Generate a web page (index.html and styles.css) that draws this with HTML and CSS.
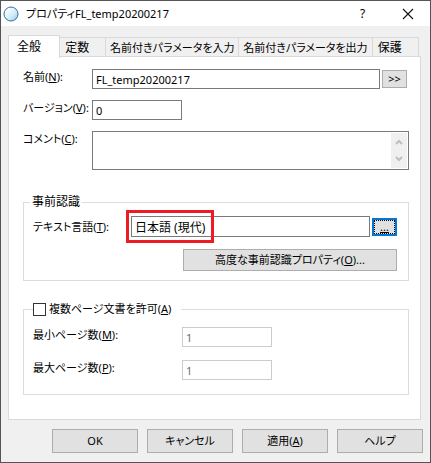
FILE: index.html
```html
<!DOCTYPE html>
<html lang="ja">
<head>
<meta charset="utf-8">
<title>プロパティFL_temp20200217</title>
<link rel="stylesheet" href="styles.css">
</head>
<body>
<main class="window">
  <header class="titlebar">
    <svg class="orb" viewBox="0 0 16 16" aria-hidden="true">
      <defs>
        <linearGradient id="orb-fill" x1="0" y1="0" x2="1" y2="1">
          <stop offset="0.15" stop-color="#fff"/>
          <stop offset="0.6" stop-color="#d3ebf9"/>
          <stop offset="1" stop-color="#8fc9ee"/>
        </linearGradient>
      </defs>
      <circle cx="8" cy="8" r="7" fill="url(#orb-fill)" stroke="#2f6f9f"/>
    </svg>
    <h1 class="title">プロパティFL_temp20200217</h1>
    <button class="caption" type="button" aria-label="ヘルプ">?</button>
    <button class="caption" type="button" aria-label="閉じる">
      <svg class="close" viewBox="0 0 12 12" aria-hidden="true"><path d="M1 1 11 11M11 1 1 11" stroke="#111" stroke-width="1.1"/></svg>
    </button>
  </header>

  <nav class="tabs" role="tablist">
    <button class="tab tab-active" type="button" role="tab" aria-selected="true">全般</button>
    <button class="tab" type="button" role="tab">定数</button>
    <button class="tab tab-long" type="button" role="tab">名前付きパラメータを入力</button>
    <button class="tab tab-long" type="button" role="tab">名前付きパラメータを出力</button>
    <button class="tab" type="button" role="tab">保護</button>
  </nav>

  <form class="panel">
    <div class="field">
      <label for="name">名前(<u>N</u>):</label>
      <input class="text name" id="name" type="text" value="FL_temp20200217">
      <button class="button mini" type="button">&gt;&gt;</button>
    </div>
    <div class="field">
      <label for="version">バージョン(<u>V</u>):</label>
      <input class="text short" id="version" type="text" value="0">
    </div>
    <div class="field">
      <label for="comment">コメント(<u>C</u>):</label>
      <div class="comment">
        <textarea id="comment"></textarea>
        <div class="scroll" aria-hidden="true">
          <svg class="arrow" viewBox="0 0 8 6"><path d="M1 5 4 2 7 5" fill="none" stroke="#bfbfbf" stroke-width="2"/></svg>
          <svg class="arrow" viewBox="0 0 8 6"><path d="M1 1 4 4 7 1" fill="none" stroke="#bfbfbf" stroke-width="2"/></svg>
        </div>
      </div>
    </div>

    <fieldset class="group">
      <legend>事前認識</legend>
      <div class="language">
        <label for="language">テキスト言語(<u>T</u>):</label>
        <div class="highlighted">
          <input class="text" id="language" type="text" value="日本語 (現代)">
          <span class="highlight"></span>
        </div>
        <button class="button mini focused" type="button"><u>...</u></button>
      </div>
      <button class="button advanced" type="button">高度な事前認識プロパティ(<u>O</u>)...</button>
    </fieldset>

    <fieldset class="group pages">
      <legend class="check"><input id="multi" type="checkbox"><label for="multi">複数ページ文書を許可(<u>A</u>)</label></legend>
      <div class="page-row">
        <label for="min">最小ページ数(<u>M</u>):</label>
        <input class="text short" id="min" type="text" value="1" disabled>
      </div>
      <div class="page-row">
        <label for="max">最大ページ数(<u>P</u>):</label>
        <input class="text short" id="max" type="text" value="1" disabled>
      </div>
    </fieldset>
  </form>

  <footer class="actions">
    <button class="button" type="button">OK</button>
    <button class="button" type="button">キャンセル</button>
    <button class="button" type="button">適用(<u>A</u>)</button>
    <button class="button" type="button">ヘルプ</button>
  </footer>
</main>
</body>
</html>
```
FILE: styles.css
```css
* { box-sizing: border-box; }

body {
  margin: 0;
  background: #f0f0f0;
  color: #000;
  font: 11px/16px "Noto Sans", "Noto Sans CJK JP", sans-serif;
  font-feature-settings: "palt";
}

button, input, textarea {
  margin: 0;
  font: inherit;
  font-feature-settings: inherit;
  color: inherit;
  border-radius: 0;
}

u { text-underline-offset: 1px; }

.window {
  display: flex;
  flex-direction: column;
  min-height: 100vh;
  border: 1px solid #555;
}

.titlebar {
  display: flex;
  align-items: center;
  height: 25px;
  padding-left: 2px;
  background: #fff;
}

.orb { width: 16px; height: 16px; }

.title {
  flex: 1;
  margin: 0 0 0 7px;
  font-size: 11px;
  font-weight: 400;
}

.caption {
  display: grid;
  place-items: center;
  width: 45px;
  height: 25px;
  padding: 0;
  border: 0;
  background: none;
  font-size: 12px;
}

.close { width: 12px; height: 12px; }

.tabs {
  display: grid;
  grid-template-columns: 52fr 46fr 132fr 133fr 46fr;
  align-items: end;
  height: 31px;
  margin: 0 11px 0 7px;
}

.tab {
  height: 20px;
  padding: 0 5px;
  border: 1px solid #d9d9d9;
  border-width: 1px 1px 0 0;
  background: #f0f0f0;
  font-size: 12px;
  text-align: left;
  white-space: nowrap;
}

.tab-long { padding: 0; font-size: 11px; text-align: center; }

.tab-active {
  z-index: 1;
  height: 23px;
  margin-bottom: -1px;
  padding: 0 8px;
  border-left-width: 1px;
  background: #fff;
}

.panel {
  display: flex;
  flex-direction: column;
  margin: -1px 9px 0 7px;
  padding: 12px 11px 24px 14px;
  border: 1px solid #d9d9d9;
  background: #fff;
}

.field {
  display: grid;
  grid-template-columns: 69px 1fr auto;
  align-items: start;
  margin-bottom: 11px;
}

.field > label, .language > label { white-space: nowrap; }

.text {
  width: 100%;
  height: 20px;
  padding: 0 3px;
  border: 1px solid #7a7a7a;
  background: #fff;
}

.text:disabled { border-color: #ccc; color: #6d6d6d; }

.short { width: 90px; }

.button {
  padding: 0;
  border: 1px solid #adadad;
  background: #e1e1e1;
}

.mini {
  width: 25px;
  height: 18px;
  margin: 1px 2px;
  line-height: 14px;
}

.comment {
  display: flex;
  grid-column: 2 / -1;
  height: 39px;
  padding: 1px;
  border: 1px solid #7a7a7a;
}

.comment textarea {
  flex: 1;
  min-width: 0;
  padding: 2px;
  border: 0;
  resize: none;
}

.scroll {
  display: flex;
  flex-direction: column;
  justify-content: space-around;
  align-items: center;
  width: 16px;
  background: #f0f0f0;
}

.arrow { width: 8px; height: 6px; }

.group {
  min-width: 0;
  margin: 13px 0 0;
  padding: 6px 11px 9px 9px;
  border: 1px solid #dcdcdc;
}

.group legend {
  margin-left: -3px;
  padding: 0 2px;
  font-size: 12px;
}

.language {
  display: grid;
  grid-template-columns: 98px 1fr auto;
  align-items: center;
}

.language .mini { margin-right: 0; }

.highlighted { position: relative; }

.highlighted .text { display: block; height: 21px; font-size: 12px; }

.highlight {
  position: absolute;
  top: -6px;
  left: -5px;
  width: 88px;
  height: 33px;
  border: 3px solid #ed1c24;
  pointer-events: none;
}

.focused {
  border: 2px solid #0078d7;
  outline: 1px dotted #000;
  outline-offset: -3px;
}

.advanced {
  display: block;
  width: 214px;
  height: 22px;
  margin: 12px 0 0 auto;
}

.pages {
  margin-top: 20px;
  padding: 10px 9px 14px;
}

.pages .check {
  display: flex;
  align-items: center;
  gap: 3px;
  margin-left: 0;
  padding: 0 10px 0 0;
  font-size: 11px;
}

.check input {
  appearance: none;
  width: 13px;
  height: 13px;
  border: 1px solid #333;
  background: #fff;
}

.page-row {
  display: grid;
  grid-template-columns: 149px 1fr;
  align-items: start;
}

.page-row + .page-row { margin-top: 13px; }

.actions {
  display: flex;
  justify-content: flex-end;
  gap: 9px;
  padding: 9px 7px;
}

.actions .button { width: 86px; height: 24px; }
```
